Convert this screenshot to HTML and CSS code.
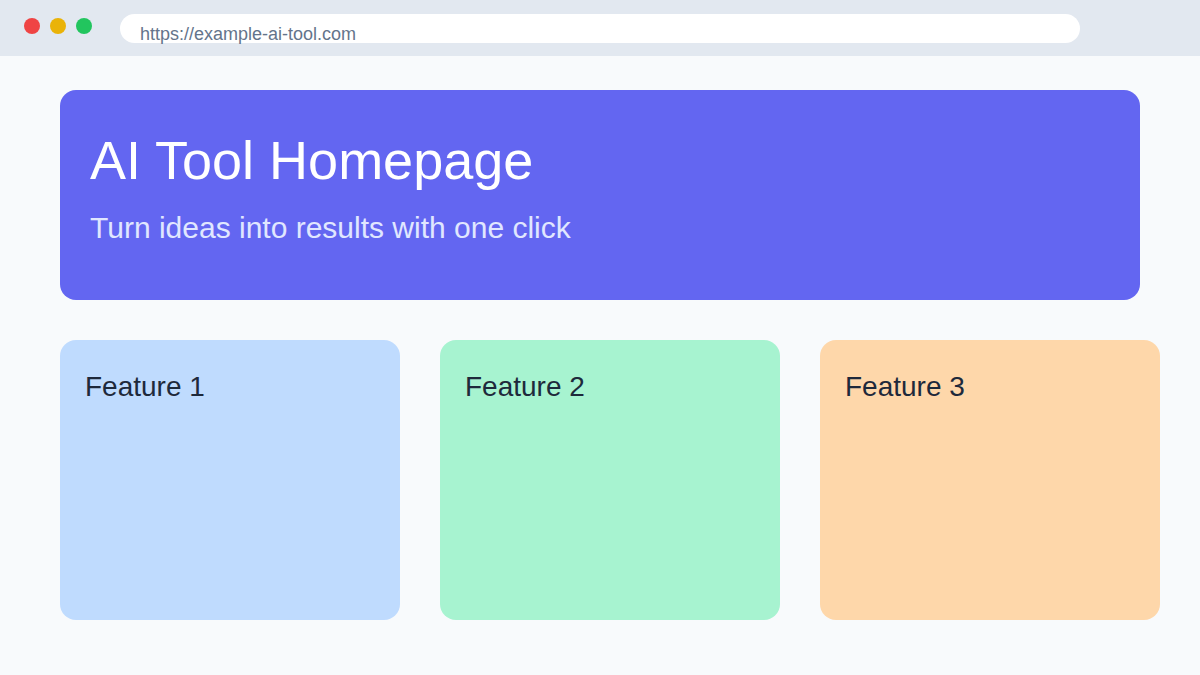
FILE: index.html
```html
<!DOCTYPE html>
<html lang="en">
<head>
<meta charset="utf-8">
<title>AI Tool Homepage</title>
<link rel="stylesheet" href="styles.css">
</head>
<body>
  <header class="chrome">
    <div class="dots">
      <span class="dot dot-red"></span>
      <span class="dot dot-yellow"></span>
      <span class="dot dot-green"></span>
    </div>
    <div class="address">https://example-ai-tool.com</div>
  </header>

  <main class="page">
    <section class="hero">
      <h1 class="hero-title">AI Tool Homepage</h1>
      <p class="hero-sub">Turn ideas into results with one click</p>
    </section>

    <section class="features">
      <div class="card card-blue"><h2 class="card-title">Feature 1</h2></div>
      <div class="card card-green"><h2 class="card-title">Feature 2</h2></div>
      <div class="card card-orange"><h2 class="card-title">Feature 3</h2></div>
    </section>
  </main>
</body>
</html>
```

FILE: styles.css
```css
html, body {
  margin: 0;
  padding: 0;
}

body {
  width: 1200px;
  height: 675px;
  overflow: hidden;
  background: #f8fafc;
  font-family: "Liberation Sans", Arial, sans-serif;
}

/* browser window chrome */
.chrome {
  height: 56px;
  background: #e2e8f0;
  display: flex;
  align-items: flex-start;
}

.dots {
  display: flex;
  gap: 10px;
  margin: 18px 0 0 24px;
}

.dot {
  width: 16px;
  height: 16px;
  border-radius: 50%;
}

.dot-red { background: #ef4444; }
.dot-yellow { background: #eab308; }
.dot-green { background: #22c55e; }

.address {
  box-sizing: border-box;
  margin: 14px 0 0 28px;
  width: 960px;
  height: 29px;
  padding: 6px 0 0 20px;
  border-radius: 15px;
  background: #ffffff;
  color: #64748b;
  font-size: 18px;
  line-height: 29px;
  white-space: nowrap;
}

/* page content */
.page {
  padding: 34px 60px 0;
}

.hero {
  box-sizing: border-box;
  height: 210px;
  padding: 43px 30px 0;
  border-radius: 16px;
  background: #6366f1;
}

.hero-title {
  margin: 0;
  color: #ffffff;
  font-size: 54px;
  line-height: 54px;
  font-weight: 400;
}

.hero-sub {
  margin: 26px 0 0;
  color: #e0e7ff;
  font-size: 30px;
  line-height: 30px;
}

.features {
  margin-top: 40px;
  display: grid;
  grid-template-columns: repeat(3, 340px);
  gap: 40px;
}

.card {
  box-sizing: border-box;
  height: 280px;
  padding: 33px 25px 0;
  border-radius: 16px;
}

.card-blue { background: #bfdbfe; }
.card-green { background: #a7f3d0; }
.card-orange { background: #fed7aa; }

.card-title {
  margin: 0;
  color: #1e293b;
  font-size: 28px;
  line-height: 28px;
  font-weight: 400;
}
```
